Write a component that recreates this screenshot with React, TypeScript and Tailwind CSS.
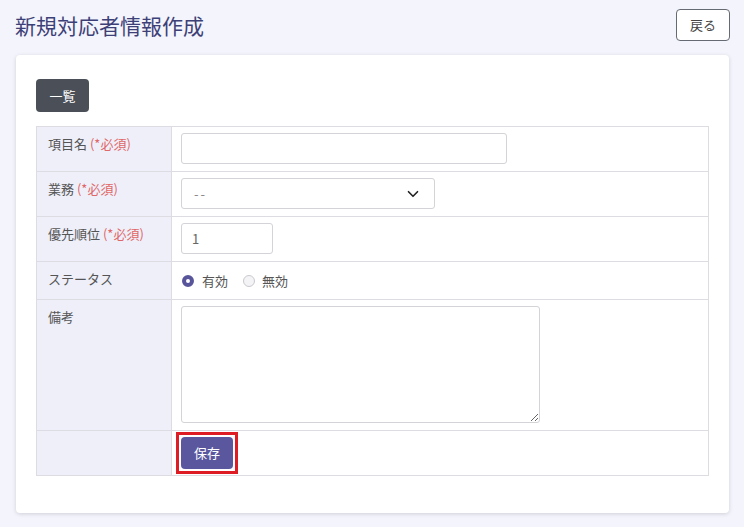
import React from 'react';

const font = { fontFamily: '"Noto Sans CJK JP", "Noto Sans", sans-serif' };

const Required = () => <span className="text-[#e06767]"> (*必須)</span>;

const labelCls =
  'w-[135px] border border-[#dcdce2] bg-[#eeeff9] px-[11px] pt-[7px] pb-[6px] align-top text-[13px] leading-[20px] text-[#555]';
const valueCls = 'border border-[#dcdce2] px-[9px] pt-[6px] pb-[7px] align-top';
const inputCls =
  'block h-[31px] rounded-[3px] border border-[#d3d3d8] bg-white px-3 text-[13px] text-[#666] outline-none';

const App = () => {
  return (
    <div className="min-h-[527px] w-full bg-[#f3f4fc] px-[15px] pt-[9px]" style={font}>
      <div className="flex items-center justify-between">
        <h1 className="text-[21px] leading-[30px] font-normal text-[#3d4077]">新規対応者情報作成</h1>
        <button
          type="button"
          className="mr-[-1px] h-[32px] w-[54px] rounded-[4px] border border-[#666a73] bg-white text-[13px] text-[#444]"
        >
          戻る
        </button>
      </div>

      <div className="mt-[14px] ml-[1px] rounded-[4px] bg-white px-[20px] pt-[24px] pb-[37px] shadow-[0_1px_4px_rgba(0,0,0,0.15)]">
        <button
          type="button"
          className="h-[33px] w-[53px] rounded-[4px] bg-[#4b5058] text-[13px] text-white"
        >
          一覧
        </button>

        <table className="mt-[14px] w-full border-collapse border border-[#dcdce2]">
          <tbody>
            <tr>
              <td className={labelCls}>
                項目名<Required />
              </td>
              <td className={valueCls}>
                <input type="text" className={`${inputCls} w-[326px]`} />
              </td>
            </tr>
            <tr>
              <td className={labelCls}>
                業務<Required />
              </td>
              <td className={valueCls}>
                <div className={`${inputCls} flex w-[254px] items-center justify-between`}>
                  <span className="tracking-[2px] text-[#888]">--</span>
                  <svg width="12" height="12" viewBox="0 0 16 16" className="mr-[3px]">
                    <path d="M2 5l6 6 6-6" fill="none" stroke="#222" strokeWidth="2.2" strokeLinecap="round" strokeLinejoin="round" />
                  </svg>
                </div>
              </td>
            </tr>
            <tr>
              <td className={labelCls}>
                優先順位<Required />
              </td>
              <td className={valueCls}>
                <input type="text" defaultValue="1" className={`${inputCls} w-[92px] px-[10px]`} />
              </td>
            </tr>
            <tr>
              <td className={`${labelCls} h-[38px]`}>ステータス</td>
              <td className="border border-[#dcdce2] px-[9px] align-middle">
                <div className="flex items-center text-[13px] text-[#555]">
                  <span className="ml-[1px] inline-block h-[12px] w-[12px] rounded-full border-[4px] border-[#58559b] bg-white" />
                  <span className="ml-[8px]">有効</span>
                  <span className="ml-[15px] inline-block h-[12px] w-[12px] rounded-full border border-[#c9c9cf] bg-[#f4f4f6]" />
                  <span className="ml-[7px]">無効</span>
                </div>
              </td>
            </tr>
            <tr>
              <td className={labelCls}>備考</td>
              <td className={valueCls}>
                <textarea className="block h-[117px] w-[359px] rounded-[3px] border border-[#d3d3d8] bg-white outline-none" />
              </td>
            </tr>
            <tr>
              <td className={labelCls}></td>
              <td className="border border-[#dcdce2] py-[1px] pl-[4px] align-top">
                <div className="w-fit border-[3px] border-[#dd1c24] p-[2px]">
                  <button
                    type="button"
                    className="block h-[32px] w-[52px] rounded-[4px] bg-[#5a579f] text-[13px] text-white"
                  >
                    保存
                  </button>
                </div>
              </td>
            </tr>
          </tbody>
        </table>
      </div>
    </div>
  );
};

export default App;
